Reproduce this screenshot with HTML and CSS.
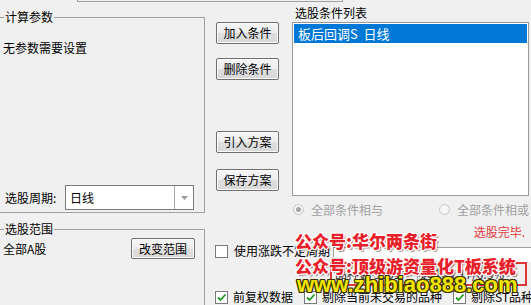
FILE: index.html
```html
<!DOCTYPE html>
<html lang="zh-CN">
<head>
<meta charset="utf-8">
<title>选股</title>
<link rel="stylesheet" href="styles.css">
</head>
<body>
<div class="page">
  <div class="topline"></div>
  <div class="app">
    <div class="left">
      <div class="group group-params">
        <div class="group-title">计算参数</div>
        <div class="noparam">无参数需要设置</div>
        <div class="period-row">
          <span class="period-label">选股周期:</span>
          <div class="combo">
            <span class="combo-text">日线</span>
            <span class="combo-btn"><svg width="7" height="4" viewBox="0 0 7 4"><path d="M0 0H7L3.5 4Z" fill="#9a9a9a"/></svg></span>
          </div>
        </div>
      </div>
      <div class="group group-range">
        <div class="group-title">选股范围</div>
        <div class="range-row">
          <span>全部A股</span>
          <button class="btn btn-range">改变范围</button>
        </div>
      </div>
    </div>
    <div class="main">
      <div class="upper">
        <div class="mid">
          <button class="btn btn-add">加入条件</button>
          <button class="btn btn-del">删除条件</button>
          <button class="btn btn-import">引入方案</button>
          <button class="btn btn-save">保存方案</button>
        </div>
        <div class="right">
          <div class="list-label">选股条件列表</div>
          <div class="listbox">
            <div class="list-item selected">板后回调S&nbsp;&nbsp;日线</div>
          </div>
          <div class="radio-row">
            <span class="radio-item"><span class="radio on"></span><span class="radio-text">全部条件相与</span></span>
            <span class="radio-item"><span class="radio"></span><span class="radio-text">全部条件相或</span></span>
          </div>
          <div class="done">选股完毕.</div>
        </div>
      </div>
      <div class="lower">
        <div class="row-a">
          <span class="cb"></span>
          <span class="cb-text">使用涨跌不定周期</span>
          <div class="field"></div>
        </div>
        <div class="status">
          <span class="status-cell status-count">品种数 5351</span>
          <span class="status-sep"></span>
          <span class="status-cell">选中数 17/0.3%</span>
        </div>
        <div class="row-c">
          <span class="cb-item"><span class="cb checked"><svg width="11" height="11" viewBox="0 0 11 11"><path d="M2 5.5L4.5 8L9.5 2.5" fill="none" stroke="#1f9a1f" stroke-width="1.8"/></svg></span><span class="cb-text">前复权数据</span></span>
          <span class="cb-item"><span class="cb checked"><svg width="11" height="11" viewBox="0 0 11 11"><path d="M2 5.5L4.5 8L9.5 2.5" fill="none" stroke="#1f9a1f" stroke-width="1.8"/></svg></span><span class="cb-text">剔除当前未交易的品种</span></span>
          <span class="cb-item"><span class="cb checked"><svg width="11" height="11" viewBox="0 0 11 11"><path d="M2 5.5L4.5 8L9.5 2.5" fill="none" stroke="#1f9a1f" stroke-width="1.8"/></svg></span><span class="cb-text">剔除ST品种</span></span>
        </div>
      </div>
    </div>
  </div>
  <div class="wm wm-1">公众号:华尔两条街</div>
  <div class="wm wm-2">公众号:顶级游资量化T板系统</div>
  <div class="wm wm-3">www.zhibiao888.com</div>
</div>
</body>
</html>
```
FILE: styles.css
```css
* { box-sizing: border-box; }
body {
  margin: 0;
  background: #f0f0f0;
  font: 12px/14px "Noto Sans CJK SC", "Liberation Sans", sans-serif;
  color: #000;
}
.page {
  width: 531px;
  height: 305px;
  overflow: hidden;
  position: relative;
  background: #f0f0f0;
}
.topline {
  margin-left: 77px;
  width: 266px;
  height: 2px;
  border-left: 1px solid #a0a0a0;
  border-right: 1px solid #a0a0a0;
  border-bottom: 1px solid #a0a0a0;
}
.app {
  display: flex;
  height: 303px;
}
.left {
  width: 205px;
  flex: none;
}
.group {
  margin-left: -1px;
  border: 1px solid #a0a0a0;
  padding-left: 3px;
}
.group-title {
  margin: -8px 0 0 1px;
  padding: 0 1px;
  width: fit-content;
  background: #f0f0f0;
  line-height: 14px;
}
.group-params {
  margin-top: 15px;
  height: 196px;
  display: flex;
  flex-direction: column;
  padding-bottom: 2px;
}
.noparam {
  margin-top: 16px;
  line-height: 16px;
}
.period-row {
  margin-top: auto;
  display: flex;
  align-items: center;
}
.period-label {
  margin-left: 2px;
  width: 60px;
  flex: none;
}
.combo {
  width: 129px;
  height: 25px;
  border: 1px solid #7a7a7a;
  background: #fff;
  display: flex;
  align-items: center;
}
.combo-text {
  padding-left: 4px;
}
.combo-btn {
  margin-left: auto;
  width: 19px;
  height: 23px;
  border-left: 1px solid #a8a8a8;
  display: flex;
  align-items: center;
  justify-content: center;
}
.group-range {
  margin-top: 16px;
  height: 90px;
  padding-right: 9px;
}
.range-row {
  margin-top: 2px;
  display: flex;
  align-items: center;
  justify-content: space-between;
}
.btn {
  font: 12px/14px "Noto Sans CJK SC", "Liberation Sans", sans-serif;
  color: #000;
  padding: 0;
  border: 1px solid #707070;
  border-radius: 2px;
  background: linear-gradient(#f6f6f6, #ececec 50%, #dfdfdf 51%, #d8d8d8);
  box-shadow: inset 0 0 0 1px #fbfbfb;
  display: block;
}
.btn-range {
  width: 64px;
  height: 21px;
}
.main {
  flex: 1;
  display: flex;
  flex-direction: column;
}
.upper {
  height: 238px;
  display: flex;
  flex: none;
}
.mid {
  width: 87px;
  flex: none;
  padding-left: 11px;
}
.mid .btn {
  width: 63px;
  height: 22px;
}
.btn-add { margin-top: 20px; }
.btn-del { margin-top: 14px; }
.btn-import { margin-top: 51px; }
.btn-save { margin-top: 16px; }
.right {
  flex: 1;
}
.list-label {
  margin-top: 4px;
  padding-left: 3px;
}
.listbox {
  margin-top: 2px;
  width: 237px;
  height: 174px;
  border: 1px solid #9a9a9a;
  background: #fff;
  padding: 1px;
}
.list-item {
  height: 19px;
  line-height: 19px;
  font-size: 13px;
  padding-left: 4px;
}
.list-item.selected {
  background: #0078d7;
  color: #fff;
}
.radio-row {
  margin-top: 7px;
  height: 13px;
  display: flex;
  align-items: center;
  justify-content: space-between;
  padding: 0 4px 0 1px;
  color: #a0a0a0;
}
.radio-item {
  display: flex;
  align-items: center;
}
.radio {
  width: 11px;
  height: 11px;
  border-radius: 50%;
  border: 1px solid #c4c4c4;
  background: #f6f6f6;
  display: flex;
  align-items: center;
  justify-content: center;
}
.radio.on::after {
  content: "";
  width: 5px;
  height: 5px;
  border-radius: 50%;
  background: #a6a6a6;
}
.radio-text {
  margin-left: 7px;
}
.done {
  margin-top: 9px;
  text-align: right;
  padding-right: 8px;
  color: #e0383c;
}
.lower {
  flex: 1;
}
.row-a {
  margin-top: 4px;
  height: 18px;
  display: flex;
  align-items: flex-start;
  padding-left: 10px;
}
.cb {
  width: 13px;
  height: 13px;
  flex: none;
  border: 1px solid #7a7a7a;
  background: #fff;
  display: flex;
  align-items: center;
  justify-content: center;
}
.row-a .cb {
  margin-top: 1px;
}
.cb-text {
  margin-left: 6px;
  white-space: nowrap;
}
.field {
  flex: 1;
  margin-left: 3px;
  margin-top: 3px;
  height: 15px;
  border-top: 1px solid #a0a0a0;
  border-left: 1px solid #a0a0a0;
  background: #fff;
}
.status {
  margin-left: 125px;
  width: 197px;
  height: 24px;
  border: 2px solid #e23636;
  display: flex;
  align-items: center;
  padding-left: 3px;
  color: #333;
  white-space: nowrap;
}
.status-count {
  width: 82px;
}
.status-sep {
  width: 1px;
  height: 16px;
  background: #a8a8a8;
  margin-right: 2px;
}
.row-c {
  margin-top: 4px;
  display: flex;
  align-items: center;
  gap: 11px;
  padding-left: 10px;
  white-space: nowrap;
}
.cb-item {
  display: flex;
  align-items: center;
}
.row-c .cb-text {
  margin-left: 5px;
}
.wm {
  position: absolute;
  white-space: nowrap;
  font-family: "Noto Sans CJK SC", sans-serif;
  font-weight: 900;
  font-size: 17px;
  line-height: 17px;
  color: #e8202a;
  text-shadow: 1px 0 #fff, -1px 0 #fff, 0 1px #fff, 0 -1px #fff, 1px 1px #fff, -1px -1px #fff, 1px -1px #fff, -1px 1px #fff, 2px 2px 1px rgba(60,0,0,.45);
}
.wm-1 { left: 295px; top: 232px; }
.wm-2 { left: 295px; top: 257px; }
.wm-3 {
  left: 297px;
  top: 274px;
  font-family: "Liberation Sans", sans-serif;
  font-weight: 700;
  font-size: 22px;
  line-height: 22px;
  color: #f3e600;
  text-shadow: 1px 0 #3a3200, -1px 0 #3a3200, 0 1px #3a3200, 0 -1px #3a3200, 1px 1px #3a3200, -1px -1px #3a3200, 1px -1px #3a3200, -1px 1px #3a3200;
}
```
